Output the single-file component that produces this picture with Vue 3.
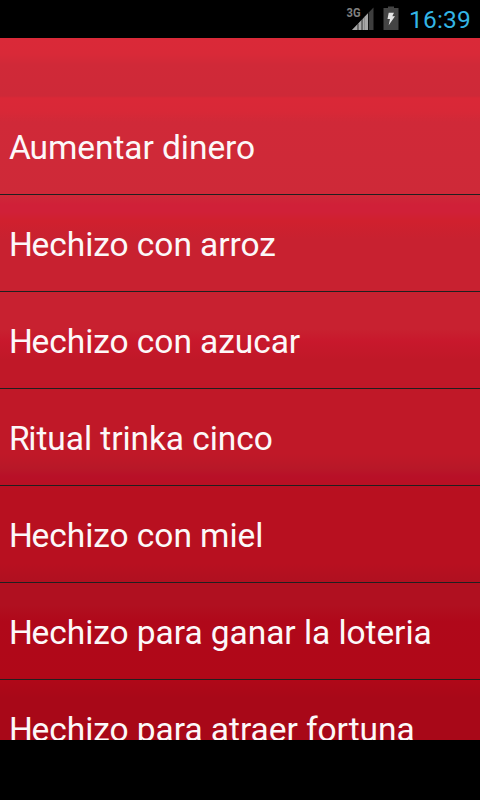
<template>
  <div class="screen">
    <header class="status-bar">
      <svg class="signal" width="30" height="26" viewBox="0 0 30 26">
        <text x="0.5" y="11" class="network" textLength="14" lengthAdjust="spacingAndGlyphs">3G</text>
        <path d="M6 24 L27.5 1.5 V24 Z" fill="#3e3e3e" />
        <path d="M6 24 L11 18.8 V24 Z" fill="#a8a8a8" />
        <path d="M12.5 17.3 L15.5 14.1 V24 H12.5 Z" fill="#a8a8a8" />
        <path d="M11 18.8 L12.5 17.3 V24 H11 Z M15.5 14.1 L17 12.5 V24 H15.5 Z" fill="#686868" />
        <path d="M17 12.5 L22 7.3 V24 H17 Z" fill="#a8a8a8" />
        <path d="M18.5 11 L19 10.5 V24 H18.5 Z" fill="#777" />
        <path d="M22 7.3 L23 6.2 V24 H22 Z" fill="#111" />
      </svg>
      <svg class="battery" width="16" height="24" viewBox="0 0 16 24">
        <path d="M5 0.5 H11 V2 H15.5 V24 H0.5 V2 H5 Z" fill="#444" />
        <path d="M5.7 6.8 H11 L9.3 10.3 H12 L5.7 19.2 L7 13 H4.5 Z" fill="#e6e6e6" />
      </svg>
      <span class="clock">{{ time }}</span>
    </header>

    <main class="content">
      <ul class="spell-list">
        <li v-for="spell in spells" :key="spell" class="spell">
          <span class="spell-name">{{ spell }}</span>
        </li>
      </ul>
    </main>
  </div>
</template>

<script setup>
import { ref } from 'vue'
const time = ref('16:39')
const spells = ref([
  'Aumentar dinero',
  'Hechizo con arroz',
  'Hechizo con azucar',
  'Ritual trinka cinco',
  'Hechizo con miel',
  'Hechizo para ganar la loteria',
  'Hechizo para atraer fortuna'
])
</script>

<style>
body {
  margin: 0;
  background: #000;
}
</style>

<style scoped>
.screen {
  display: flex;
  flex-direction: column;
  width: 480px;
  height: 800px;
  overflow: hidden;
  background: #000;
  font-family: Roboto, sans-serif;
}
.status-bar {
  display: flex;
  align-items: flex-start;
  justify-content: flex-end;
  box-sizing: border-box;
  height: 38px;
  padding: 6px 9px 0 0;
}
.signal {
  margin-right: 7px;
}
.network {
  fill: #808080;
  font-size: 13.5px;
  font-weight: 700;
}
.battery {
  margin-right: 10px;
}
.clock {
  color: #33b5e5;
  font-size: 24.5px;
  line-height: 28px;
  letter-spacing: 0.2px;
}
.content {
  box-sizing: border-box;
  height: 702px;
  padding-top: 60px;
  overflow: hidden;
  background: linear-gradient(
    to bottom,
    #da2938 0,
    #d92938 16px,
    #d02938 27px,
    #ce2938 58px,
    #da2837 60px,
    #d82837 74px,
    #d02938 84px,
    #ce2938 156px,
    #d02038 167px,
    #d02038 174px,
    #d0202e 183px,
    #c82130 201px,
    #c82130 291px,
    #c8182c 303px,
    #c01828 322px,
    #c01828 416px,
    #b81828 430px,
    #b81028 438px,
    #b81020 454px,
    #b81020 526px,
    #b01020 543px,
    #b01020 567px,
    #b0081a 584px,
    #b00818 640px,
    #a80818 660px,
    #a80818 702px
  );
}
.spell-list {
  margin: 0;
  padding: 0;
  list-style: none;
}
.spell {
  display: flex;
  align-items: center;
  box-sizing: border-box;
  height: 97px;
  padding: 4px 0 0 9px;
  border-bottom: 1px solid #20201f;
}
.spell-name {
  color: #fcf8f9;
  font-size: 33.5px;
  line-height: 40px;
  letter-spacing: -0.06px;
  white-space: nowrap;
}
.spell-name::first-letter {
  letter-spacing: -1.3px;
}
</style>
